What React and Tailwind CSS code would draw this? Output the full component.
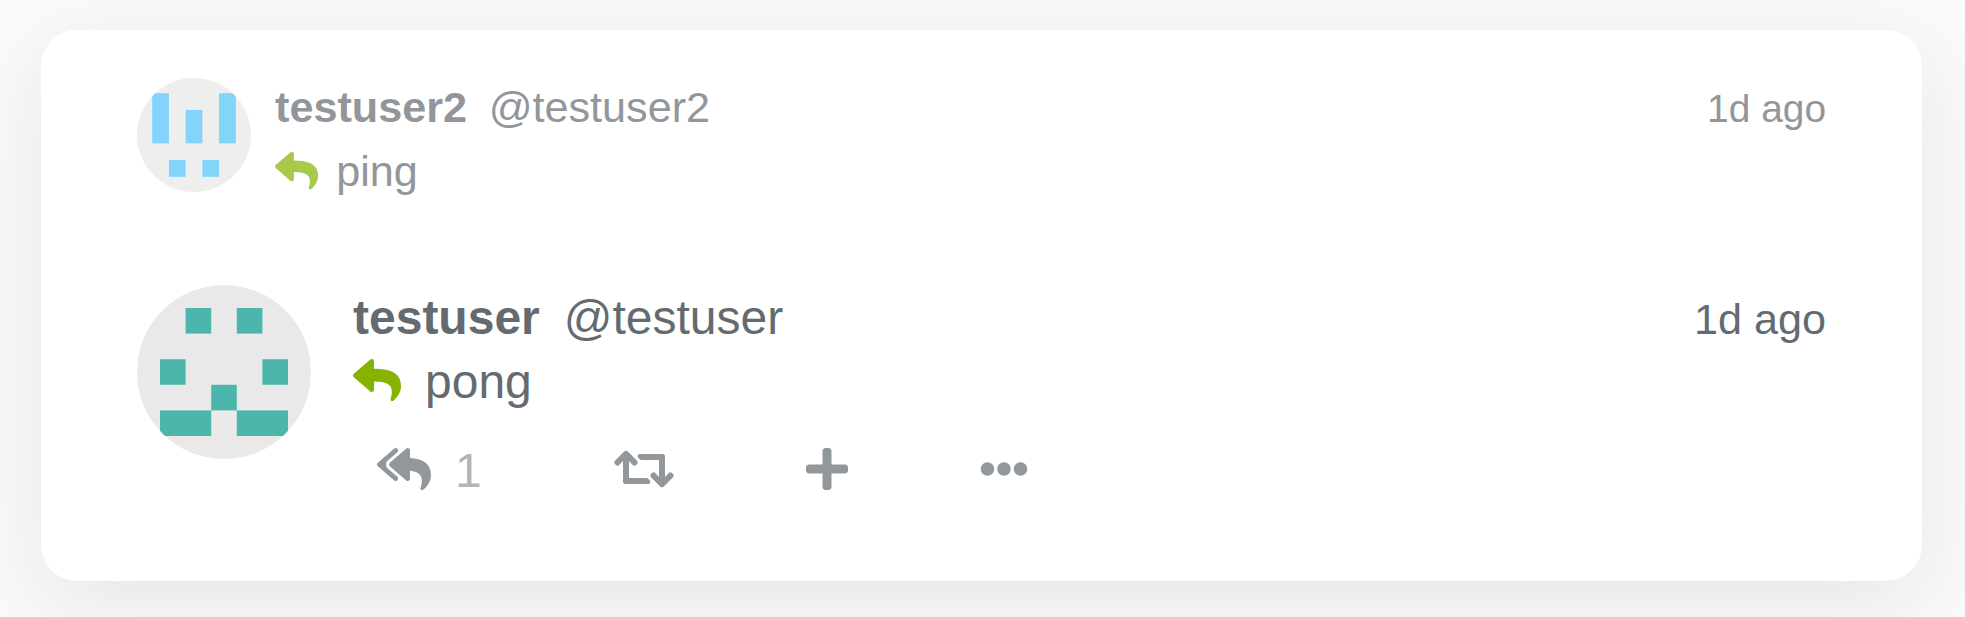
import React from 'react';
import { FaReply, FaReplyAll, FaRetweet, FaPlus, FaEllipsisH } from 'react-icons/fa';

function Identicon({ size, margin, cells, color, background, className }) {
  const cell = (size - margin * 2) / 5;
  return (
    <svg viewBox={`0 0 ${size} ${size}`} className={className}>
      <rect width={size} height={size} fill={background} />
      {cells.map(([x, y, w, h]) => (
        <rect
          key={`${x}-${y}`}
          x={margin + x * cell}
          y={margin + y * cell}
          width={w * cell}
          height={h * cell}
          fill={color}
        />
      ))}
    </svg>
  );
}

const parentCells = [[0, 0, 1, 3], [4, 0, 1, 3], [2, 1, 1, 2], [1, 4, 1, 1], [3, 4, 1, 1]];
const noteCells = [[1, 0, 1, 1], [3, 0, 1, 1], [0, 2, 1, 1], [4, 2, 1, 1], [2, 3, 1, 1], [0, 4, 2, 1], [3, 4, 2, 1]];

function ParentNote() {
  return (
    <article className="flex h-[207px] gap-6 text-[43.2px]">
      <Identicon size={114} margin={15.2} cells={parentCells} color="#82d4fa" background="#eeeeee" className="size-[114px] shrink-0 rounded-full" />
      <div className="grow opacity-70">
        <header className="flex h-[58px] items-baseline leading-[58px]">
          <span className="font-bold">testuser2</span>
          <span className="ml-[21.6px]">@testuser2</span>
          <time className="ml-auto text-[38.88px]">1d ago</time>
        </header>
        <div className="mt-[3px] flex items-center leading-[64px]">
          <FaReply className="mr-[18px] size-[43.2px] text-[#86b300]" />
          <span>ping</span>
        </div>
      </div>
    </article>
  );
}

function Note() {
  return (
    <article className="flex gap-[42px] text-[48px]">
      <Identicon size={174} margin={23} cells={noteCells} color="#4db6ac" background="#e9e9e9" className="size-[174px] shrink-0 rounded-full" />
      <div className="grow">
        <header className="flex h-16 items-baseline leading-[66px]">
          <span className="font-bold">testuser</span>
          <span className="ml-6">@testuser</span>
          <time className="ml-auto text-[43.2px]">1d ago</time>
        </header>
        <div className="flex h-16 items-center leading-[66px]">
          <FaReply className="mb-0.5 mr-6 size-12 text-[#86b300]" />
          <span className="pt-0.5">pong</span>
        </div>
        <footer className="mt-6 flex h-16 items-center pl-6 text-[#91979b]">
          <button className="flex h-16 w-[237px] items-center gap-6">
            <FaReplyAll className="h-12 w-[54px]" />
            <span className="pt-1 leading-[64px] text-[#b3b5b6]">1</span>
          </button>
          <button className="w-[192px]"><FaRetweet className="h-12 w-[60px]" /></button>
          <button className="w-[174px]"><FaPlus className="h-12 w-[42px]" /></button>
          <button><FaEllipsisH className="size-12" /></button>
        </footer>
      </div>
    </article>
  );
}

export default function App() {
  return (
    <main className="h-[617px] w-[1965px] overflow-hidden bg-[#fafafa] pl-[41px] pt-[30px] font-['Liberation_Sans',Arial,sans-serif] text-[#646b70]">
      <section className="h-[551px] w-[1881px] rounded-[36px] bg-white px-24 pt-12 shadow-[0_24px_88px_rgba(32,38,84,0.09)]">
        <ParentNote />
        <Note />
      </section>
    </main>
  );
}
